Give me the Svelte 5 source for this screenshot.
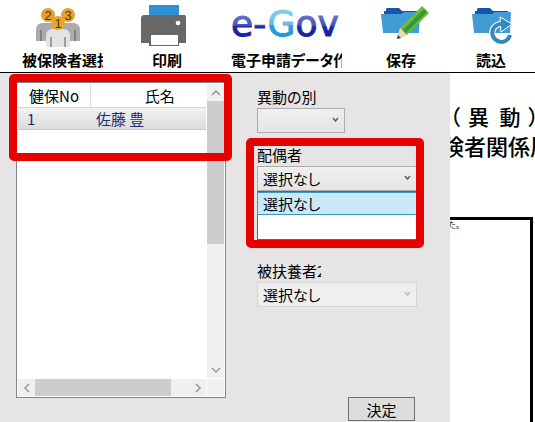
<script lang="ts">
  // Insured-person selection screen: icon toolbar on top, the person list
  // and relation fields in the grey panel, the form sheet behind it.

  type Field = {
    id: string;
    label?: string;
    value: string;
    short?: boolean;
    disabled?: boolean;
    open?: boolean;
  };

  const people = [{ no: 1, name: "佐藤 豊" }];

  const fields: Field[] = [
    { id: "kind", label: "異動の別", value: "", short: true },
    { id: "spouse", label: "配偶者", value: "選択なし", open: true },
    { id: "dependent1", value: "", disabled: true },
    { id: "dependent2", label: "被扶養者2", value: "選択なし", disabled: true },
  ];

  let selected = $state(1);
</script>

{#snippet folder()}
  <path d="M5 4l1-1h12l3 3h15v9H3V6h2z" fill="#1557a6" />
  <path d="M0 9h20l3-2h16l-1 21H2z" fill="#429bd3" />
{/snippet}

<div class="app">
  <nav class="toolbar">
    <button type="button">
      <svg class="icon" width="53" height="42" viewBox="0 0 53 42" aria-hidden="true">
        <path d="M0 36V25q0-7 7-7h8q7 0 7 7v11z" fill="#a9abad" />
        <path d="M22 36V25q0-7 7-7h8q7 0 7 7v11z" fill="#a9abad" />
        <path d="M5 25v11M39 25v11" stroke="#55575a" />
        <path d="M10 42V31q0-7 7-7h10q7 0 7 7v11z" fill="#e3e3e4" />
        <path d="M15 32v10M29 32v10" stroke="#55575a" />
        <circle cx="12" cy="10" r="7" fill="#e6a02b" />
        <circle cx="32" cy="10" r="7" fill="#e6a02b" />
        <circle cx="22" cy="18" r="7" fill="#eba52d" />
        <g class="medal">
          <text x="12" y="15">2</text>
          <text x="32" y="15">3</text>
          <text x="22" y="23">1</text>
        </g>
      </svg>
      <span class="caption">被保険者選択</span>
    </button>
    <button type="button">
      <svg class="icon" width="53" height="42" viewBox="0 0 53 42" aria-hidden="true">
        <path d="M8 0h30v11H8z" fill="#2f8fd4" />
        <path d="M2 10h42l1 2v26H0V12z" fill="#686868" />
        <circle cx="37" cy="18" r="2.3" fill="#fff" />
        <path d="M8 29h30v12H8z" fill="#686868" />
        <path d="M10 30h27v10H10z" fill="#fff" />
      </svg>
      <span class="caption">印刷</span>
    </button>
    <button type="button">
      <svg class="icon" width="111" height="42" viewBox="0 0 111 42" aria-hidden="true">
        <defs>
          <linearGradient id="navy" gradientUnits="userSpaceOnUse" x1="0" y1="10" x2="0" y2="32">
            <stop offset="0" stop-color="#6874c8" />
            <stop offset="0.5" stop-color="#4150b8" />
            <stop offset="0.5" stop-color="#1c2aa5" />
            <stop offset="1" stop-color="#1420a0" />
          </linearGradient>
          <linearGradient id="sky" gradientUnits="userSpaceOnUse" x1="0" y1="3" x2="0" y2="32">
            <stop offset="0" stop-color="#8accec" />
            <stop offset="0.6" stop-color="#68bce6" />
            <stop offset="0.6" stop-color="#2b9fd9" />
            <stop offset="1" stop-color="#2496d4" />
          </linearGradient>
        </defs>
        <text class="egov" x="0" y="31" fill="url(#navy)" stroke="url(#navy)"
          >e-<tspan fill="url(#sky)" stroke="url(#sky)">G</tspan>ov</text
        >
      </svg>
      <span class="caption">電子申請データ作成</span>
    </button>
    <button type="button">
      <svg class="icon" width="60" height="42" viewBox="-10 0 60 42" aria-hidden="true">
        {@render folder()}
        <path d="M16 34l3-11L41 1l7 7-22 22z" fill="#6dbb3c" />
        <path d="M21 26L43 4l3 3-22 22z" fill="#349a35" />
        <path d="M19 23l7 7-10 4z" fill="#eed9bf" />
        <path d="M16 34l1-4 3 3z" fill="#4b3b35" />
      </svg>
      <span class="caption">保存</span>
    </button>
    <button type="button">
      <svg class="icon" width="46" height="42" viewBox="-4 0 46 42" aria-hidden="true">
        {@render folder()}
        <path d="M38 30a9 9 0 1 1-9-11" fill="none" stroke="#fff" stroke-width="6" />
        <path d="M28 12l12 7-11 8z" fill="#2f86b9" stroke="#fff" />
        <path d="M38 30a9 9 0 1 1-10-11h4" fill="none" stroke="#3589b8" stroke-width="4" />
      </svg>
      <span class="caption">読込</span>
    </button>
  </nav>

  <main class="body">
    <section class="panel">
      <div class="list">
        <div class="rows">
          <table>
            <thead>
              <tr><th class="no">健保No</th><th>氏名</th></tr>
            </thead>
            <tbody>
              {#each people as p (p.no)}
                <tr class:selected={selected === p.no} onclick={() => (selected = p.no)}>
                  <td>{p.no}</td>
                  <td>{p.name}</td>
                </tr>
              {/each}
            </tbody>
          </table>
        </div>
        <div class="vbar">
          <svg width="17" height="17" aria-hidden="true"><path d="M5 11l4-4 4 4" /></svg>
          <div class="track"><div class="thumb"></div></div>
          <svg width="17" height="17" aria-hidden="true"><path d="M5 7l4 4 4-4" /></svg>
        </div>
        <div class="hbar">
          <svg width="17" height="17" aria-hidden="true"><path d="M11 5l-4 4 4 4" /></svg>
          <div class="track"><div class="thumb"></div></div>
          <svg width="17" height="17" aria-hidden="true"><path d="M7 5l4 4-4 4" /></svg>
        </div>
        <div class="corner"></div>
        <div class="mark mark-list"></div>
      </div>

      <form class="fields">
        {#each fields as f (f.id)}
          <div class="field">
            <label for={f.id}>{f.label ?? ""}</label>
            <div class="combo" class:short={f.short}>
              <select id={f.id} disabled={f.disabled}>
                <option>{f.value}</option>
              </select>
              <svg class="arrow" class:dim={f.disabled} width="7" height="6" aria-hidden="true">
                <path d="M1 1l2.5 3L6 1" />
              </svg>
              {#if f.open}
                <ul class="menu">
                  <li class="current">選択なし</li>
                  <li></li>
                </ul>
              {/if}
            </div>
            {#if f.open}
              <div class="mark mark-field"></div>
            {/if}
          </div>
        {/each}
        <button class="ok" type="button">決定</button>
      </form>
    </section>

    <section class="sheet">
      <p class="heading">（&emsp13;異&ensp;動&emsp13;）</p>
      <p class="heading second">険者関係届</p>
      <div class="frame">た。</div>
    </section>
  </main>
</div>

<style>
  :global(body) {
    margin: 0;
  }
  .app {
    display: flex;
    flex-direction: column;
    height: 100vh;
    background: #fff;
    color: #000;
    font-family: "Noto Sans CJK JP", sans-serif;
    font-size: 15px;
    line-height: 21px;
    font-feature-settings: "palt";
    overflow: hidden;
  }
  button,
  select {
    font: inherit;
    font-feature-settings: inherit;
    color: inherit;
  }

  .toolbar {
    display: grid;
    grid-template-columns: 81fr 128fr 111fr 118fr 62fr;
    padding: 5px 13px 2px 22px;
    border-bottom: 1px solid #000;
  }
  .toolbar button {
    display: flex;
    flex-direction: column;
    align-items: center;
    gap: 2px;
    min-width: 0;
    padding: 0;
    border: 0;
    background: none;
  }
  .icon {
    flex: none;
  }
  .caption {
    max-width: 100%;
    overflow: hidden;
    white-space: nowrap;
    font-weight: 700;
  }
  .medal {
    font: 13px "Liberation Sans", sans-serif;
    text-anchor: middle;
    fill: #4a3a18;
  }
  .egov {
    font: 36px "DejaVu Sans", sans-serif;
    stroke-width: 1;
  }

  .body {
    display: flex;
    flex: 1;
    min-height: 0;
  }
  .panel {
    display: flex;
    flex: none;
    gap: 31px;
    box-sizing: border-box;
    width: 450px;
    padding: 9px 33px 0 16px;
    background: #e6e4e5;
  }

  .list {
    position: relative;
    display: grid;
    grid-template: minmax(0, 1fr) 17px / minmax(0, 1fr) 17px;
    flex: 1;
    gap: 1px;
    margin-bottom: 24px;
    padding: 1px;
    border: 1px solid #7f8488;
    background: #fff;
  }
  .rows {
    overflow: hidden;
  }
  /* The name column runs on under the vertical bar. */
  table {
    width: 112%;
    border-collapse: separate;
    border-spacing: 0;
  }
  th {
    height: 23px;
    padding: 0;
    font-weight: 400;
    border-bottom: 1px solid #d5d5d5;
  }
  .no {
    width: 72px;
    border-right: 1px solid #e0e0e0;
  }
  td {
    height: 21px;
    padding: 0 5px;
    color: #1c2f78;
    font-feature-settings: normal;
  }
  td:first-child {
    padding-left: 9px;
  }
  .selected td {
    border-bottom: 1px solid #c8c8c8;
    background: linear-gradient(#f2f2f2, #dcdcdc);
  }
  .vbar,
  .hbar {
    display: flex;
    background: #f0f0f0;
  }
  .vbar {
    flex-direction: column;
  }
  .vbar svg,
  .hbar svg {
    flex: none;
    fill: none;
    stroke: #969696;
    stroke-width: 1.5;
  }
  .track {
    flex: 1;
  }
  .thumb {
    background: #cdcdcd;
  }
  .vbar .thumb {
    height: 55%;
  }
  .hbar .thumb {
    width: 88%;
    height: 100%;
  }
  .corner {
    background: #f0f0f0;
  }

  /* Red guide frames lie over the controls they point at. */
  .mark {
    position: absolute;
    box-sizing: border-box;
    border: 8px solid #e60000;
    border-radius: 5px;
    pointer-events: none;
  }
  .mark-list {
    top: -9px;
    left: -8px;
    right: -7px;
    height: 87px;
  }
  .mark-field {
    top: -7px;
    left: -11px;
    right: -7px;
    height: 110px;
    z-index: 3;
  }

  .fields {
    display: flex;
    flex-direction: column;
    gap: 12px;
    width: 160px;
    padding-top: 5px;
  }
  .field {
    position: relative;
  }
  label {
    display: block;
    max-width: 64px;
    height: 21px;
    overflow: hidden;
    line-height: 19px;
    white-space: nowrap;
  }
  .combo {
    position: relative;
  }
  .combo.short {
    width: 88px;
  }
  select {
    display: block;
    width: 100%;
    height: 25px;
    padding: 0 20px 0 5px;
    appearance: none;
    border: 1px solid #acacac;
    border-radius: 0;
    background: linear-gradient(#f0f0f0, #e5e5e5);
  }
  select:disabled {
    border-color: #d5d5d5;
    background: #efefef;
    color: #000;
    opacity: 1;
  }
  .arrow {
    position: absolute;
    top: 9px;
    right: 6px;
    fill: none;
    stroke: #606060;
    stroke-width: 1.5;
    pointer-events: none;
  }
  .arrow.dim {
    stroke: #bdbdbd;
  }
  .menu {
    position: absolute;
    top: 100%;
    left: 0;
    right: 0;
    z-index: 2;
    margin: 0;
    padding: 0;
    border: 1px solid #646464;
    background: #fff;
    list-style: none;
  }
  .menu li {
    height: 24px;
    padding: 0 5px;
  }
  .menu .current {
    height: 21px;
    margin: 0 -1px;
    border: 1px solid #3c97bd;
    background: #cbe8f6;
  }
  .ok {
    align-self: flex-end;
    width: 67px;
    height: 24px;
    margin: auto 2px 1px 0;
    padding: 0;
    border: 1px solid #707070;
    background: #dddddd;
  }

  .sheet {
    display: flex;
    flex: 1;
    flex-direction: column;
    min-width: 0;
    padding-top: 29px;
    overflow: hidden;
    font-feature-settings: normal;
  }
  .heading {
    margin: 0 0 0 -10px;
    font-size: 21px;
    line-height: 29px;
    font-weight: 500;
    white-space: nowrap;
  }
  .second {
    margin-left: -8px;
    font-size: 22px;
  }
  .frame {
    flex: 1;
    margin: 57px 2px 0 0;
    border: solid #000;
    border-width: 3px 3px 0 0;
    font-size: 8px;
    line-height: 9px;
    text-indent: -2px;
  }
</style>
